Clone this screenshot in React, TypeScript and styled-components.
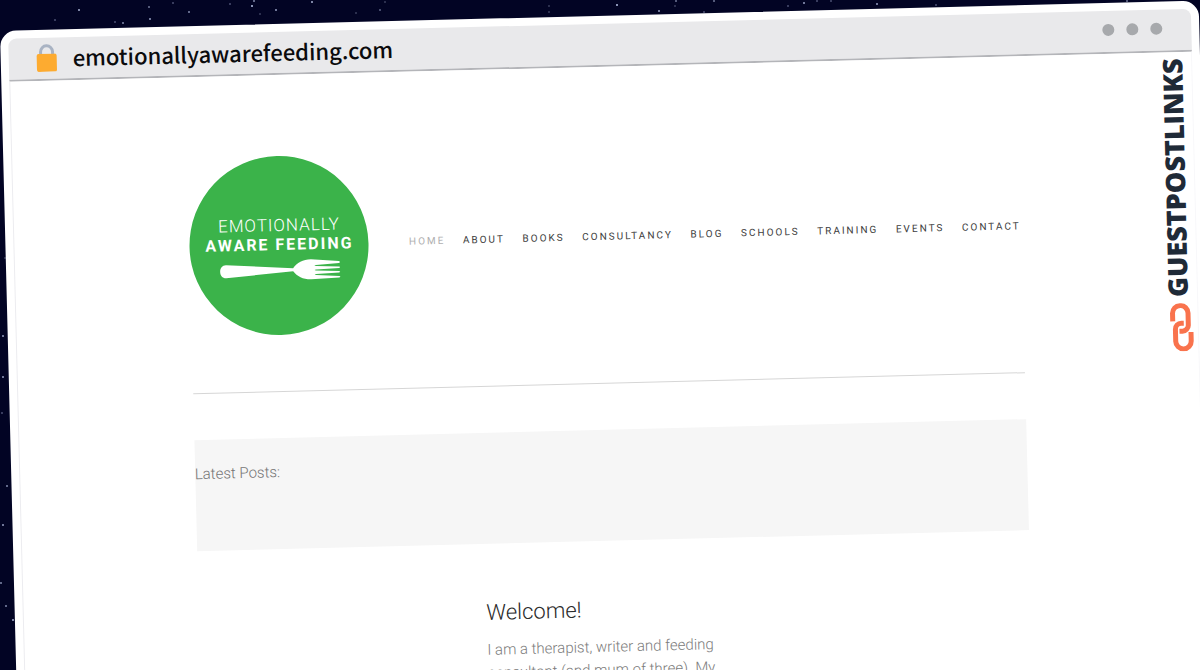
import React from "react";
import styled, { createGlobalStyle } from "styled-components";

const GlobalStyle = createGlobalStyle`
  *, *::before, *::after { box-sizing: border-box; }
  body { margin: 0; background: #020424; }
`;

const Sky = styled.div`
  position: relative;
  height: 100vh;
  overflow: hidden;
  padding: 31px 1px 0 0;
  background: #020424;
  font-family: Roboto, "Liberation Sans", sans-serif;
`;

const StarField = styled.svg`
  position: absolute;
  inset: 0;
  width: 100%;
  height: 100%;
`;

const BrowserWindow = styled.div`
  position: relative;
  width: 100%;
  min-height: 110vh;
  border: 8px solid #ffffff;
  border-radius: 16px;
  background: #ffffff;
  transform: rotate(-1.45deg);
  transform-origin: 0 0;
`;

const TitleBar = styled.header`
  display: flex;
  align-items: center;
  height: 43px;
  padding: 0 29px 3px 27px;
  border-bottom: 2px solid #b4b5b9;
  border-radius: 8px 8px 0 0;
  background: #e9e9eb;
`;

const LockIcon = styled.svg`
  width: 22px;
  height: 30px;
  flex: none;
`;

const Address = styled.span`
  flex: 1;
  margin-left: 15px;
  color: #0b0b0d;
  font-family: "Noto Sans CJK JP", "Noto Sans", sans-serif;
  font-size: 22px;
  font-weight: 500;
  line-height: 32px;
`;

const WindowDots = styled.div`
  display: flex;
  gap: 12px;
`;

const Dot = styled.span`
  width: 12px;
  height: 12px;
  border-radius: 50%;
  background: #a7a9ac;
`;

const Viewport = styled.div`
  min-height: 100vh;
  border-left: 1px solid #ececf0;
  border-right: 1px solid #f8f8fa;
`;

const Site = styled.div`
  max-width: 832px;
  margin: 0 auto;
  padding-top: 81px;
`;

const SiteHeader = styled.div`
  display: flex;
  align-items: center;
  gap: 41px;
  padding-bottom: 56px;
  border-bottom: 1px solid #d6d6d6;
`;

const Logo = styled.a`
  display: flex;
  flex: none;
  flex-direction: column;
  align-items: center;
  width: 179px;
  height: 179px;
  padding: 59px 0 0 2px;
  border-radius: 50%;
  background: #3bb34a;
  color: #ffffff;
  text-decoration: none;
  white-space: nowrap;
`;

const LogoLine = styled.span<{ $strong?: boolean }>`
  font-size: ${(p) => (p.$strong ? 16 : 17)}px;
  font-weight: ${(p) => (p.$strong ? 700 : 300)};
  letter-spacing: ${(p) => (p.$strong ? 2 : 1)}px;
  line-height: 20px;
`;

const Fork = styled.svg`
  width: 122px;
  height: 22px;
  margin-top: 4px;
`;

const Nav = styled.nav`
  display: flex;
  flex: 1;
  justify-content: space-between;
  padding-bottom: 2px;
`;

const NavLink = styled.a<{ $current?: boolean }>`
  color: ${(p) => (p.$current ? "#b0b0b0" : "#404040")};
  font-size: 10px;
  letter-spacing: 2px;
  line-height: 16px;
  text-decoration: none;
`;

const LatestPosts = styled.section`
  min-height: 111px;
  margin-top: 46px;
  padding-top: 22px;
  background: #f6f6f6;
  color: #747474;
  font-size: 15px;
  font-weight: 300;
  line-height: 24px;
`;

const Columns = styled.main`
  display: grid;
  grid-template-columns: repeat(3, 1fr);
  gap: 32px;
  margin-top: 53px;
`;

const Intro = styled.article`
  grid-column: 2;
`;

const Heading = styled.h1`
  margin: 0;
  color: #2b2b2b;
  font-size: 22px;
  font-weight: 300;
  line-height: 32px;
`;

const Copy = styled.p`
  margin: 10px 24px 0 0;
  color: #7c7c7c;
  font-size: 15px;
  font-weight: 300;
  line-height: 23px;
`;

const Brand = styled.a`
  position: absolute;
  top: 49px;
  right: 5px;
  display: flex;
  flex-direction: column;
  align-items: flex-end;
  gap: 6px;
  color: #1f2a37;
  text-decoration: none;
`;

const BrandName = styled.span`
  font-family: "Open Sans", sans-serif;
  font-size: 27px;
  font-weight: 800;
  line-height: 30px;
  writing-mode: vertical-rl;
  transform: rotate(180deg);
`;

const ChainIcon = styled.svg`
  width: 24px;
  height: 48px;
`;

const links = ["Home", "About", "Books", "Consultancy", "Blog", "Schools", "Training", "Events", "Contact"];

const stars = [
  [79, 10, 0.9], [149, 7, 0.6], [123, 23, 0.7], [115, 22, 0.4], [150, 19, 0.8], [55, 20, 0.4],
  [252, 6, 1], [254, 1, 0.7], [276, 10, 0.8], [189, 12, 0.7], [173, 3, 0.4], [230, 4, 0.4],
  [312, 2, 0.9], [380, 10, 0.5], [385, 2, 0.3], [260, 14, 0.3], [356, 13, 0.3],
  [617, 5, 1], [659, 11, 0.8], [676, 1, 0.6], [675, 6, 0.3], [714, 1, 0.6], [704, 12, 0.4],
  [549, 6, 0.3], [549, 12, 0.3], [804, 3, 0.8], [788, 6, 0.4], [817, 1, 0.4], [831, 1, 0.4],
  [877, 4, 0.8], [936, 5, 0.4], [1127, 1, 0.6],
  [5, 258, 0.3], [3, 336, 0.8], [3, 377, 0.8],
  [2, 413, 0.4], [7, 486, 0.7], [3, 525, 0.8], [1, 583, 0.7], [6, 606, 0.7], [13, 620, 0.9],
];

export default function App() {
  return (
    <>
      <GlobalStyle />
      <Sky>
        <StarField aria-hidden="true">
          {stars.map(([x, y, glow]) => (
            <circle key={`${x}-${y}`} cx={x} cy={y} r="1" fill="#b9c4e6" opacity={glow} />
          ))}
        </StarField>
        <BrowserWindow>
          <TitleBar>
            <LockIcon viewBox="0 0 22 30" aria-hidden="true">
              <path d="M5 13V10a6 6 0 0 1 12 0v3" fill="none" stroke="#a9b3c3" strokeWidth="3" />
              <rect x="1" y="12" width="20" height="18" rx="2" fill="#fdab30" />
            </LockIcon>
            <Address>emotionallyawarefeeding.com</Address>
            <WindowDots>
              <Dot />
              <Dot />
              <Dot />
            </WindowDots>
          </TitleBar>
          <Viewport>
            <Site>
              <SiteHeader>
                <Logo href="#home">
                  <LogoLine>EMOTIONALLY</LogoLine>
                  <LogoLine $strong>AWARE FEEDING</LogoLine>
                  <Fork viewBox="0 0 122 22" aria-hidden="true">
                    <path
                      fill="#ffffff"
                      d="M7 5C3 5 1 8 1 11.500S3 18 7 18L74 12.500C78 18 84 21 92 21L120 20Q122 19 120 18.500L97 17Q94 16.500 97 16L120 15Q122 14.500 120 13.500L97 12.500Q94 12 97 11.500L120 10.500Q122 9.500 120 9L97 8Q94 7.500 97 7L120 5.500Q122 4.500 120 3.500L92 1C84 1 78 4 74 9.500Z"
                    />
                  </Fork>
                </Logo>
                <Nav>
                  {links.map((label, i) => (
                    <NavLink key={label} href={`#${label.toLowerCase()}`} $current={i === 0}>
                      {label.toUpperCase()}
                    </NavLink>
                  ))}
                </Nav>
              </SiteHeader>
              <LatestPosts>Latest Posts:</LatestPosts>
              <Columns>
                <Intro>
                  <Heading>Welcome!</Heading>
                  <Copy>I am a therapist, writer and feeding consultant (and mum of three). My</Copy>
                </Intro>
              </Columns>
            </Site>
          </Viewport>
          <Brand href="#guestpostlinks">
            <BrandName>GUESTPOSTLINKS</BrandName>
            <ChainIcon viewBox="0 0 24 48" fill="none" stroke="#f9734d" strokeWidth="5" aria-hidden="true">
              <path d="M3 18V10a7.500 7.500 0 0 1 15.500 0V22a6 6 0 0 1-6 6H9.500" />
              <path d="M21 29v9a7.500 7.500 0 0 1-15.500 0V26a6 6 0 0 1 6-6h2.500" />
            </ChainIcon>
          </Brand>
        </BrowserWindow>
      </Sky>
    </>
  );
}
